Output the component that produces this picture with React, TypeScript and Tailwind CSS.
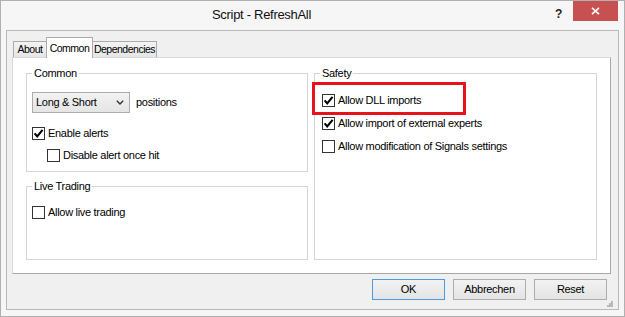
import type { ReactNode } from 'react';

const font = { fontFamily: '"Liberation Sans", Arial, sans-serif' };

function Checkbox({ checked }: { checked?: boolean }) {
  return (
    <span className="flex h-[13px] w-[13px] shrink-0 items-center justify-center border border-[#333] bg-white">
      {checked ? (
        <svg width="11" height="11" viewBox="0 0 11 11">
          <path d="M1.6 5.4 L4.2 8.4 L9.6 1.8" stroke="#000" strokeWidth="2.1" fill="none" />
        </svg>
      ) : null}
    </span>
  );
}

function CheckRow({ checked, label, className = '' }: { checked?: boolean; label: string; className?: string }) {
  return (
    <div className={`flex h-[13px] items-center gap-[3px] ${className}`}>
      <Checkbox checked={checked} />
      <span className="leading-[13px] whitespace-nowrap">{label}</span>
    </div>
  );
}

function Group({ title, className = '', children }: { title: string; className?: string; children: ReactNode }) {
  return (
    <fieldset className={`border border-[#d5d5d5] ${className}`}>
      <legend className="px-[2px] leading-[13px]">{title}</legend>
      {children}
    </fieldset>
  );
}

function Button({ label, primary }: { label: string; primary?: boolean }) {
  return (
    <div
      className={`flex h-[21px] w-[73px] items-center justify-center border bg-gradient-to-b from-[#f2f2f2] to-[#e4e4e4] leading-[13px] ${
        primary ? 'border-[#4a9ae6]' : 'border-[#adadad]'
      }`}
    >
      {label}
    </div>
  );
}

export default function App() {
  return (
    <div
      className="flex h-[317px] w-[625px] flex-col border border-[#b0b0b0] bg-[#f6f6f6] text-[11px] tracking-[-0.3px] text-black"
      style={font}
    >
      {/* title bar */}
      <div className="flex h-[29px] shrink-0 items-start">
        <div className="flex-1 pl-[211px] pt-[6px] text-[13px] leading-[16px] text-[#111]">Script - RefreshAll</div>
        <div className="pt-[6px] pr-[11px] text-[12px] font-bold leading-[14px] text-[#222]">?</div>
        <div className="mr-[6px] flex h-[20px] w-[45px] items-center justify-center bg-[#c75050]">
          <svg width="9" height="8" viewBox="0 0 9 8">
            <path d="M1 0.8 L8 7.2 M8 0.8 L1 7.2" stroke="#fff" strokeWidth="1.6" />
          </svg>
        </div>
      </div>

      {/* client area */}
      <div className="relative mx-[5px] flex h-[280px] flex-col border border-[#b9b9b9] bg-[#f0f0f0] pt-[6px]">
        {/* tabs */}
        <div className="ml-[6px] flex items-end text-[10.5px] tracking-[-0.5px]">
          <div className="flex h-[16px] w-[34px] items-center justify-center border border-b-0 border-[#acacac] bg-gradient-to-b from-[#f3f3f3] to-[#e6e6e6] leading-[13px]">
            About
          </div>
          <div className="relative z-10 -mb-px -ml-px flex h-[21px] w-[47px] items-start justify-center border border-b-0 border-[#acacac] bg-white pt-[4px] leading-[13px]">
            Common
          </div>
          <div className="-ml-px flex h-[16px] w-[65px] items-center justify-center border border-b-0 border-[#acacac] bg-gradient-to-b from-[#f3f3f3] to-[#e6e6e6] leading-[13px]">
            Dependencies
          </div>
        </div>

        {/* tab panel */}
        <div className="ml-[5px] mr-[7px] flex h-[217px] gap-[6px] border border-[#d9d9d9] border-r-[#a8a8a8] border-b-[#a8a8a8] bg-white px-[13px] pt-[9px] pb-[13px]">
          <div className="flex w-[282px] flex-col gap-[8px]">
            <Group title="Common" className="h-[105px] pl-[5px]">
              <div className="mt-[12px] flex items-center gap-[6px]">
                <div className="flex h-[21px] w-[98px] items-center justify-between border border-[#acacac] bg-gradient-to-b from-[#f2f2f2] to-[#e5e5e5] pl-[3px] pr-[5px]">
                  <span className="leading-[13px]">Long &amp; Short</span>
                  <svg width="8" height="5" viewBox="0 0 8 5">
                    <path d="M0.8 0.8 L4 4 L7.2 0.8" stroke="#333" strokeWidth="1.4" fill="none" />
                  </svg>
                </div>
                <span className="leading-[13px]">positions</span>
              </div>
              <CheckRow checked label="Enable alerts" className="mt-[14px]" />
              <CheckRow label="Disable alert once hit" className="mt-[9px] ml-[15px]" />
            </Group>
            <Group title="Live Trading" className="flex-1 pl-[5px]">
              <CheckRow label="Allow live trading" className="mt-[13px]" />
            </Group>
          </div>

          <Group title="Safety" className="w-[283px] pl-[7px] [&>legend]:-ml-[2px]">
            <div className="mt-[14px] flex flex-col gap-[10px]">
              <div className="relative">
                <CheckRow checked label="Allow DLL imports" />
                {/* highlight annotation */}
                <span className="absolute -top-[12px] -left-[10px] h-[33px] w-[154px] border-[3px] border-[#e8121c]" />
              </div>
              <CheckRow checked label="Allow import of external experts" />
              <CheckRow label="Allow modification of Signals settings" />
            </div>
          </Group>
        </div>

        {/* buttons */}
        <div className="mt-[5px] mr-[11px] flex justify-end gap-[8px]">
          <Button label="OK" primary />
          <Button label="Abbrechen" />
          <Button label="Reset" />
        </div>

        {/* size grip */}
        <svg className="absolute right-[5px] bottom-[2px]" width="6" height="6" viewBox="0 0 6 6">
          <rect x="4" y="0" width="2" height="2" fill="#b8b8b8" />
          <rect x="2" y="2" width="2" height="2" fill="#b8b8b8" />
          <rect x="4" y="2" width="2" height="2" fill="#b8b8b8" />
          <rect x="0" y="4" width="2" height="2" fill="#b8b8b8" />
          <rect x="2" y="4" width="2" height="2" fill="#b8b8b8" />
          <rect x="4" y="4" width="2" height="2" fill="#b8b8b8" />
        </svg>
      </div>
    </div>
  );
}
